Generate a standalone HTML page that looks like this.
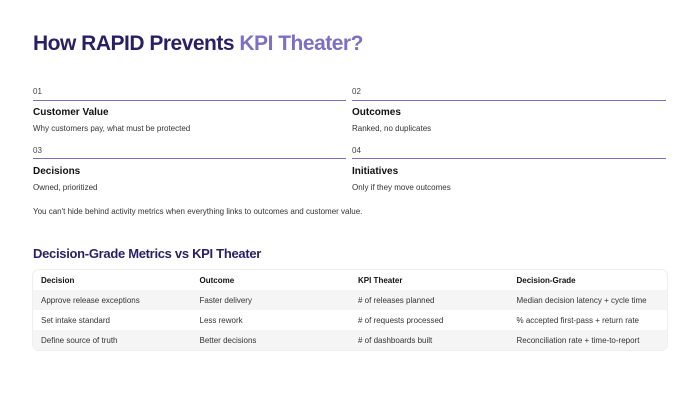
<!DOCTYPE html><html><head><style>
body{margin:0;width:700px;height:400px;background:#fff;font-family:"Liberation Sans",sans-serif;color:#1a1a1a;position:relative;overflow:hidden}
.a{position:absolute}
h1{position:absolute;left:33px;top:32px;margin:0;font-size:21px;font-weight:bold;color:#2b1f63;letter-spacing:-0.5px}
h1 span{color:#7d70c4}
.n{font-size:8px;color:#444}
.l{height:1px;background:#7d70c4}
.h{font-size:10px;font-weight:bold;color:#111}
.s{font-size:8px;color:#333}
h2{position:absolute;left:33px;top:246px;margin:0;font-size:13px;font-weight:bold;color:#2b1f63;letter-spacing:-0.3px}
table{position:absolute;left:33px;top:270px;width:634px;border-collapse:collapse;font-size:8px;border-radius:6px;overflow:hidden;box-shadow:0 0 0 1px #eee}
td{height:20px;padding:0 0 0 8px;width:150px;color:#333}
tr.hd td{font-weight:bold;color:#111}
tr.g td{background:#f5f5f5}
</style></head><body>
<h1>How RAPID Prevents <span>KPI Theater?</span></h1>
<div class="a n" style="left:33px;top:87px">01</div><div class="a l" style="left:33px;top:100px;width:313px"></div>
<div class="a n" style="left:352px;top:87px">02</div><div class="a l" style="left:352px;top:100px;width:314px"></div>
<div class="a h" style="left:33px;top:107px">Customer Value</div><div class="a s" style="left:33px;top:124px">Why customers pay, what must be protected</div>
<div class="a h" style="left:352px;top:107px">Outcomes</div><div class="a s" style="left:352px;top:124px">Ranked, no duplicates</div>
<div class="a n" style="left:33px;top:146px">03</div><div class="a l" style="left:33px;top:158px;width:313px"></div>
<div class="a n" style="left:352px;top:146px">04</div><div class="a l" style="left:352px;top:158px;width:314px"></div>
<div class="a h" style="left:33px;top:166px">Decisions</div><div class="a s" style="left:33px;top:183px">Owned, prioritized</div>
<div class="a h" style="left:352px;top:166px">Initiatives</div><div class="a s" style="left:352px;top:183px">Only if they move outcomes</div>
<div class="a s" style="left:33px;top:207px">You can't hide behind activity metrics when everything links to outcomes and customer value.</div>
<h2>Decision-Grade Metrics vs KPI Theater</h2>
<table>
<tr class="hd"><td>Decision</td><td>Outcome</td><td>KPI Theater</td><td>Decision-Grade</td></tr>
<tr class="g"><td>Approve release exceptions</td><td>Faster delivery</td><td># of releases planned</td><td>Median decision latency + cycle time</td></tr>
<tr><td>Set intake standard</td><td>Less rework</td><td># of requests processed</td><td>% accepted first-pass + return rate</td></tr>
<tr class="g"><td>Define source of truth</td><td>Better decisions</td><td># of dashboards built</td><td>Reconciliation rate + time-to-report</td></tr>
</table>
</body></html>
